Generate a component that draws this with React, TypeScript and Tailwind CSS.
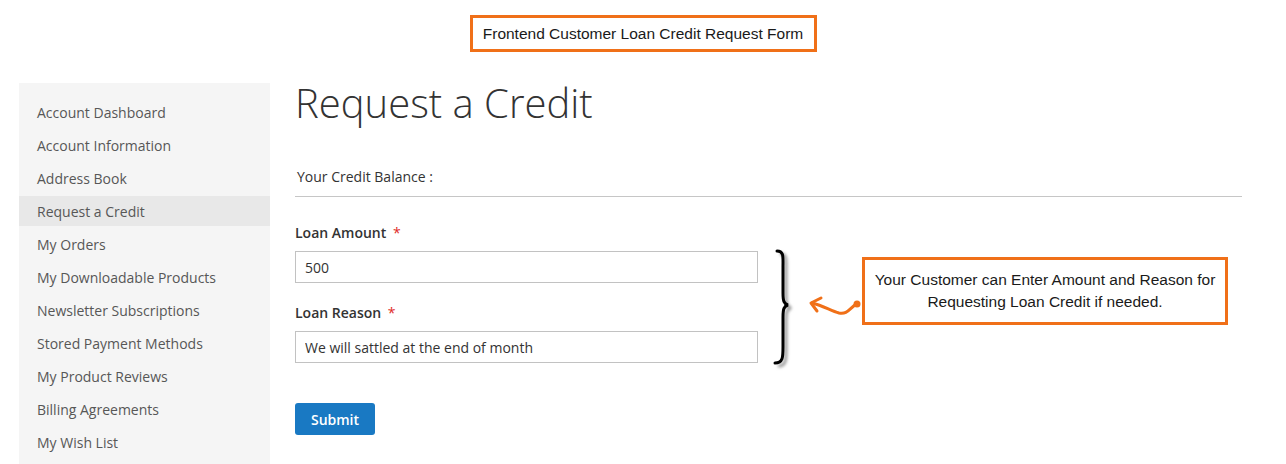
import React from "react";

const navItems = [
  "Account Dashboard",
  "Account Information",
  "Address Book",
  "Request a Credit",
  "My Orders",
  "My Downloadable Products",
  "Newsletter Subscriptions",
  "Stored Payment Methods",
  "My Product Reviews",
  "Billing Agreements",
  "My Wish List",
];

function Brace() {
  return (
    <svg width="28" height="124" viewBox="0 0 28 124" className="absolute left-[476px] top-[24px]">
      <defs>
        <filter id="sh" x="-50%" y="-10%" width="200%" height="120%">
          <feGaussianBlur stdDeviation="1.6" />
        </filter>
      </defs>
      <path
        d="M6 4 C13 4 12 10 12 20 L12 46 C12 54 13 57 17 58 C13 59 12 62 12 70 L12 100 C12 110 12 116 4 116"
        fill="none"
        stroke="#9a9a9a"
        strokeWidth="3"
        filter="url(#sh)"
        transform="translate(3 3)"
      />
      <path
        d="M6 4 C13 4 12 10 12 20 L12 46 C12 54 13 57 17 58 C13 59 12 62 12 70 L12 100 C12 110 12 116 4 116"
        fill="none"
        stroke="#000"
        strokeWidth="3"
        strokeLinecap="round"
      />
    </svg>
  );
}

function Arrow() {
  return (
    <svg width="56" height="30" viewBox="0 0 56 30" className="absolute left-[511px] top-[68px]">
      <path d="M51 13 C44 16 42 24 33 22 C25 20 18 15 6 12" fill="none" stroke="#f07018" strokeWidth="3" strokeLinecap="round" />
      <path d="M15 7 L5 12 L11 20" fill="none" stroke="#f07018" strokeWidth="3" strokeLinecap="round" strokeLinejoin="round" />
      <circle cx="51" cy="13" r="3.5" fill="#f07018" />
    </svg>
  );
}

export default function App() {
  return (
    <div className="w-[1286px] h-[464px] overflow-hidden bg-white font-['Open_Sans',sans-serif] text-[14px] text-[#333]">
      <div className="flex justify-center pt-[15px]">
        <div className="w-[347px] h-[37px] border-[3px] border-[#f07018] flex items-center justify-center font-['Liberation_Sans',sans-serif] text-[15.5px] text-[#1a1a1a]">
          Frontend Customer Loan Credit Request Form
        </div>
      </div>

      <div className="flex mt-[31px] pl-[19px]">
        {/* sidebar */}
        <div className="w-[251px] h-[400px] bg-[#f5f5f5] pt-[14px] shrink-0">
          {navItems.map((item) => (
            <div
              key={item}
              className={
                "h-[30px] mb-[3px] pl-[18px] flex items-center text-[14px] text-[#575757] " +
                (item === "Request a Credit" ? "bg-[#e8e8e8]" : "")
              }
            >
              {item}
            </div>
          ))}
        </div>

        {/* main */}
        <div className="ml-[25px] w-[947px] flex flex-col">
          <h1 className="text-[40px] font-light leading-[44px] text-[#333] mt-[-2px]">Request a Credit</h1>
          <div className="mt-[42px] pl-[2px] leading-[20px] pb-[9px] border-b border-[#c6c6c6]">Your Credit Balance :</div>

          <div className="relative mt-[26px]">
            <div className="w-[463px] flex flex-col">
              <div className="leading-[20px] font-semibold">
                Loan Amount <span className="text-[#e02b27] font-normal ml-[3px]">*</span>
              </div>
              <input
                readOnly
                value="500"
                className="mt-[8px] h-[32px] border border-[#c2c2c2] px-[9px] text-[14px] text-[#333] outline-none"
              />
              <div className="mt-[20px] leading-[20px] font-semibold">
                Loan Reason <span className="text-[#e02b27] font-normal ml-[3px]">*</span>
              </div>
              <input
                readOnly
                value="We will sattled at the end of month"
                className="mt-[8px] h-[32px] border border-[#c2c2c2] px-[9px] text-[14px] text-[#333] outline-none"
              />
              <div className="mt-[40px]">
                <button className="h-[32px] w-[80px] bg-[#1979c3] rounded-[3px] text-white font-semibold text-[14px]">
                  Submit
                </button>
              </div>
            </div>

            <Brace />
            <Arrow />
            <div className="absolute left-[567px] top-[34px] w-[366px] h-[68px] border-[3px] border-[#f07018] flex flex-col items-center justify-center font-['Liberation_Sans',sans-serif] text-[15.5px] leading-[22px] text-[#1a1a1a] text-center bg-white">
              <div>Your Customer can Enter Amount and Reason for</div>
              <div>Requesting Loan Credit if needed.</div>
            </div>
          </div>
        </div>
      </div>
    </div>
  );
}
